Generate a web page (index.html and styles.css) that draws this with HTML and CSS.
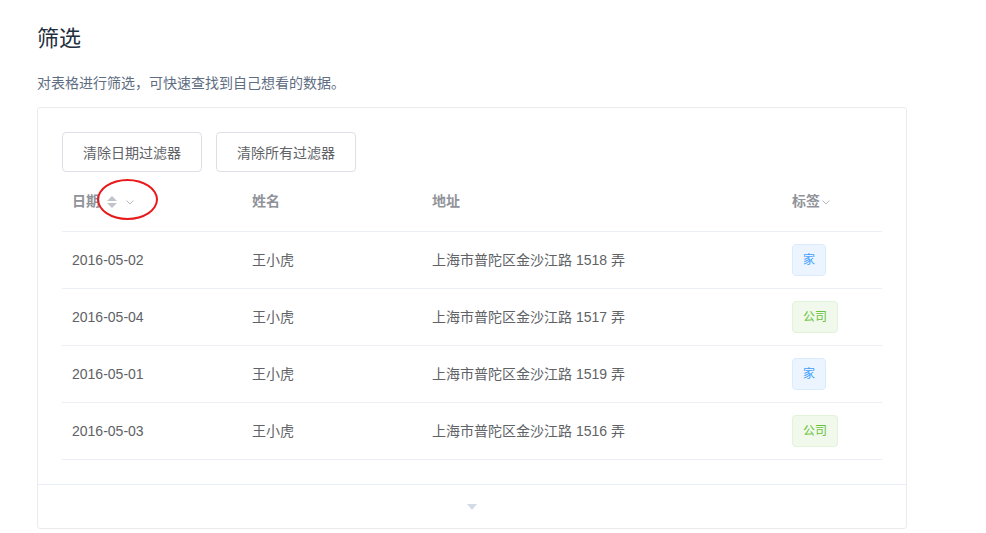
FILE: index.html
```html
<!DOCTYPE html>
<html lang="zh-CN">
<head>
<meta charset="utf-8">
<title>筛选</title>
<link rel="stylesheet" href="styles.css">
</head>
<body>
<div class="page">
  <h3 class="title">筛选</h3>
  <p class="desc">对表格进行筛选，可快速查找到自己想看的数据。</p>
  <div class="demo-block">
    <div class="source">
      <div class="btns">
        <button class="btn">清除日期过滤器</button>
        <button class="btn">清除所有过滤器</button>
      </div>
      <table class="table">
        <colgroup>
          <col class="c-date"><col class="c-name"><col class="c-addr"><col class="c-tag">
        </colgroup>
        <thead>
          <tr>
            <th>
              <div class="cell">日期<span class="sort"><i class="up"></i><i class="down"></i></span><svg class="arrow" viewBox="0 0 8 5" width="8" height="5"><path d="M0.5 0.5 L4 4 L7.5 0.5" fill="none" stroke="#b4b8c0" stroke-width="1"/></svg>
                <span class="annot"></span>
              </div>
            </th>
            <th><div class="cell">姓名</div></th>
            <th><div class="cell">地址</div></th>
            <th><div class="cell">标签<svg class="arrow tag-arrow" viewBox="0 0 8 5" width="8" height="5"><path d="M0.5 0.5 L4 4 L7.5 0.5" fill="none" stroke="#b4b8c0" stroke-width="1"/></svg></div></th>
          </tr>
        </thead>
        <tbody>
          <tr><td>2016-05-02</td><td>王小虎</td><td>上海市普陀区金沙江路 1518 弄</td><td><span class="tag tag-home">家</span></td></tr>
          <tr><td>2016-05-04</td><td>王小虎</td><td>上海市普陀区金沙江路 1517 弄</td><td><span class="tag tag-co">公司</span></td></tr>
          <tr><td>2016-05-01</td><td>王小虎</td><td>上海市普陀区金沙江路 1519 弄</td><td><span class="tag tag-home">家</span></td></tr>
          <tr><td>2016-05-03</td><td>王小虎</td><td>上海市普陀区金沙江路 1516 弄</td><td><span class="tag tag-co">公司</span></td></tr>
        </tbody>
      </table>
    </div>
    <div class="control">
      <svg viewBox="0 0 10 6" width="10" height="6"><path d="M0 0 L10 0 L5 6 Z" fill="#d3dce6"/></svg>
    </div>
  </div>
</div>
</body>
</html>
```
FILE: styles.css
```css
html, body {
  margin: 0;
  padding: 0;
  background: #fff;
}
body {
  font-family: "Liberation Sans", "Noto Sans CJK SC", sans-serif;
}
.page {
  padding: 20px 0 0 37px;
  width: 870px;
}
.title {
  margin: 0;
  font-size: 22px;
  line-height: 38px;
  font-weight: 400;
  color: #1f2f3d;
}
.desc {
  margin: 14px 0 13px;
  font-size: 14px;
  line-height: 22px;
  color: #5e6d82;
}
.demo-block {
  border: 1px solid #ebebeb;
  border-radius: 3px;
}
.source {
  padding: 24px;
}
.btns {
  display: flex;
  gap: 14px;
}
.btn {
  height: 40px;
  padding: 0 20px;
  font-family: inherit;
  font-size: 14px;
  color: #606266;
  background: #fff;
  border: 1px solid #dcdfe6;
  border-radius: 4px;
}
.table {
  width: 820px;
  border-collapse: collapse;
  table-layout: fixed;
  font-size: 14px;
  color: #606266;
}
.c-date { width: 180px; }
.c-name { width: 180px; }
.c-addr { width: 360px; }
.c-tag { width: 100px; }
.table th {
  padding: 18px 10px;
  text-align: left;
  font-weight: 700;
  color: #909399;
  border-bottom: 1px solid #ebeef5;
  line-height: 23px;
}
.cell {
  position: relative;
  display: flex;
  align-items: center;
  height: 23px;
}
.sort {
  display: inline-flex;
  flex-direction: column;
  align-items: center;
  gap: 2px;
  margin-left: 7px;
  width: 10px;
}
.sort i {
  display: block;
  width: 0;
  height: 0;
  border-left: 5px solid transparent;
  border-right: 5px solid transparent;
}
.sort .up { border-bottom: 5px solid #c0c4cc; }
.sort .down { border-top: 5px solid #c0c4cc; }
.arrow {
  margin-left: 9px;
  margin-top: 2px;
}
.tag-arrow {
  margin-left: 2px;
}
.annot {
  position: absolute;
  left: 25px;
  top: -11px;
  width: 57px;
  height: 37px;
  border: 2px solid #e8191b;
  border-radius: 50%;
}
.table td {
  padding: 12px 10px;
  height: 32px;
  line-height: 23px;
  border-bottom: 1px solid #ebeef5;
  white-space: nowrap;
}
.tag {
  display: inline-block;
  height: 32px;
  line-height: 30px;
  padding: 0 10px;
  font-size: 12px;
  border: 1px solid;
  border-radius: 4px;
  box-sizing: border-box;
  vertical-align: middle;
}
.tag-home {
  background: #ecf5ff;
  border-color: #d9ecff;
  color: #409eff;
}
.tag-co {
  background: #f0f9eb;
  border-color: #e1f3d8;
  color: #67c23a;
}
.control {
  border-top: 1px solid #eaeefb;
  height: 43px;
  display: flex;
  align-items: center;
  justify-content: center;
}
```
